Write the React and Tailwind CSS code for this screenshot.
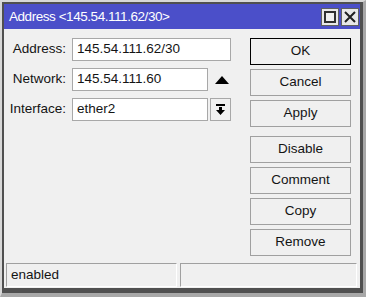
const Btn=({children,primary})=>(
  <button className={`h-[27px] w-[101px] bg-[#f0f0f0] text-[13.5px] text-[#141414] ${primary?"border border-black":"border border-[#a0a0a0]"}`}>
    {children}
  </button>
);

const Label=({children})=>(
  <div className="w-[58px] text-right text-[13.5px] text-[#141414] pr-[1px]">{children}</div>
);

export default function App(){
  return(
    <div className="w-[366px] h-[297px] bg-[#c0c0c0] border-t-2 border-l-2 border-r-[3px] border-b-[4px] border-t-[#d8d8d8] border-l-[#d8d8d8] border-r-[#a8a8a8] border-b-[#a8a8a8] font-['Liberation_Sans',Arial,sans-serif]">
      <div className="h-full border-2 border-[#505050] border-r-[3px] border-b-[5px] flex flex-col">
        {/* title bar */}
        <div className="h-[25px] bg-[#4b4fc9] flex items-center pl-[5px] pr-[1px]">
          <span className="text-white text-[13.5px] tracking-[-0.45px] flex-1 leading-none">Address &lt;145.54.111.62/30&gt;</span>
          <div className="flex gap-[2px]">
            <div className="w-[18px] h-[18px] bg-[#e8e8e8] border border-[#606060] flex items-center justify-center">
              <div className="w-[12px] h-[12px] border-2 border-[#303030] bg-[#f0f0f0]"></div>
            </div>
            <div className="w-[18px] h-[18px] bg-[#e8e8e8] border border-[#606060] flex items-center justify-center">
              <svg width="12" height="12" viewBox="0 0 12 12"><path d="M1 1 L11 11 M11 1 L1 11" stroke="#202020" strokeWidth="2"/></svg>
            </div>
          </div>
        </div>
        {/* body */}
        <div className="flex-1 bg-[#f0f0f0] flex flex-col pb-[1px]">
          <div className="flex-1 flex pt-[9px] pl-[5px]">
            <div className="flex flex-col gap-[7px] w-[227px]">
              <div className="flex items-center gap-[5px]">
                <Label>Address:</Label>
                <div className="w-[159px] h-[23px] bg-white border border-[#a8a8a8] text-[13.5px] text-[#141414] flex items-center pl-[4px]">145.54.111.62/30</div>
              </div>
              <div className="flex items-center gap-[5px]">
                <Label>Network:</Label>
                <div className="w-[136px] h-[23px] bg-white border border-[#a8a8a8] text-[13.5px] text-[#141414] flex items-center pl-[4px]">145.54.111.60</div>
                <div className="w-[18px] h-[23px] flex items-center justify-center">
                  <svg width="14" height="8" viewBox="0 0 14 8"><path d="M7 0 L14 8 L0 8 Z" fill="#000"/></svg>
                </div>
              </div>
              <div className="flex items-center gap-[5px]">
                <Label>Interface:</Label>
                <div className="flex items-center gap-[2px]">
                  <div className="w-[136px] h-[23px] bg-white border border-[#a8a8a8] text-[13.5px] text-[#141414] flex items-center pl-[4px]">ether2</div>
                  <div className="w-[21px] h-[23px] bg-[#f0f0f0] border border-[#a8a8a8] flex items-center justify-center">
                    <svg width="9" height="11" viewBox="0 0 9 11"><path d="M0 0 H9 V2 H0 Z M3 3 H6 V6 H9 L4.5 11 L0 6 H3 Z" fill="#000"/></svg>
                  </div>
                </div>
              </div>
            </div>
            <div className="ml-[14px] flex flex-col gap-[4px]">
              <Btn primary>OK</Btn>
              <Btn>Cancel</Btn>
              <Btn>Apply</Btn>
              <div className="h-px"></div>
              <Btn>Disable</Btn>
              <Btn>Comment</Btn>
              <Btn>Copy</Btn>
              <Btn>Remove</Btn>
            </div>
          </div>
          {/* status bar */}
          <div className="flex gap-[3px] pl-[2px] pr-[3px] h-[24px]">
            <div className="w-[171px] border-t border-l border-[#a0a0a0] border-r border-b border-r-white border-b-white flex items-center pl-[4px] text-[13.5px] text-[#141414]">enabled</div>
            <div className="flex-1 border-t border-l border-[#a0a0a0] border-r border-b border-r-white border-b-white"></div>
          </div>
        </div>
      </div>
    </div>
  );
}
